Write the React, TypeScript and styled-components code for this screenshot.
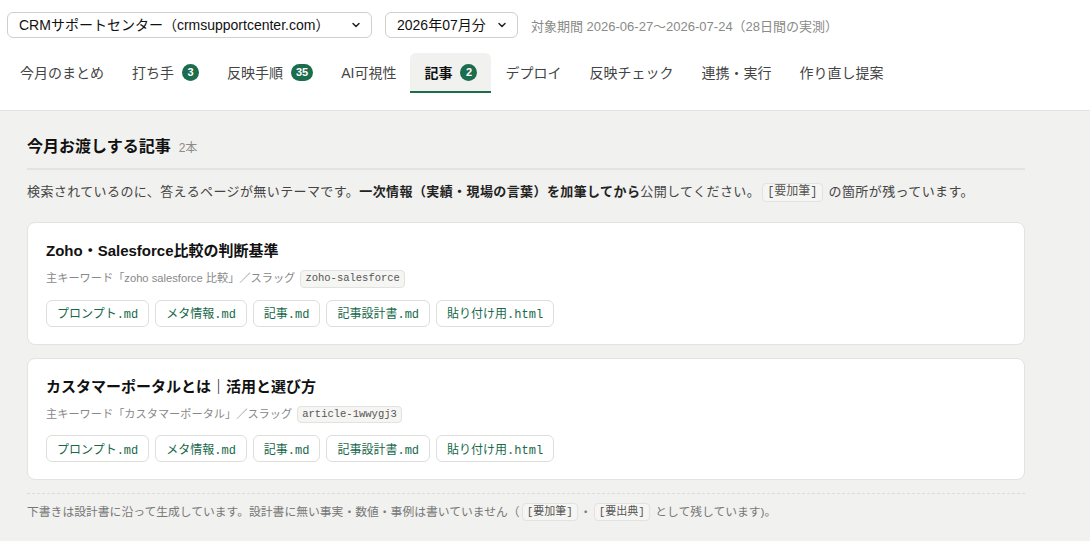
import { useState } from 'react';
import styled, { createGlobalStyle } from 'styled-components';
import { ChevronDown } from 'lucide-react';

const GlobalStyle = createGlobalStyle`
  html, body {
    margin: 0;
    padding: 0;
    background: #f1f1ef;
    font-family: "Liberation Sans", "Noto Sans CJK JP", sans-serif;
    color: #222;
  }
  * { box-sizing: border-box; }
`;

const MONO = `"Liberation Mono", "Noto Sans CJK JP", monospace`;

const Header = styled.header`
  background: #fff;
  padding: 12px 6px 17px;
  border-bottom: 1px solid #e2e2df;
`;

const TopRow = styled.div`
  display: flex;
  align-items: center;
  gap: 13px;
  height: 26px;
  padding-left: 1px;
`;

const SelectWrap = styled.div<{ $width: number }>`
  position: relative;
  width: ${(p) => p.$width}px;
  height: 26px;
`;

const Select = styled.select`
  appearance: none;
  width: 100%;
  height: 100%;
  border: 1px solid #cfcfcc;
  border-radius: 6px;
  background: #fff;
  padding: 0 28px 0 11px;
  font-family: inherit;
  font-size: 14px;
  color: #111;
  outline: none;
`;

const Chevron = styled.span`
  position: absolute;
  right: 10px;
  top: 7px;
  display: flex;
  pointer-events: none;
  color: #222;
`;

const Period = styled.span`
  font-size: 13px;
  color: #8a8a87;
`;

const Tabs = styled.nav`
  display: flex;
  margin-top: 15px;
`;

const Tab = styled.button<{ $active?: boolean }>`
  display: flex;
  align-items: center;
  gap: 8px;
  height: 40px;
  padding: 0 14px;
  border: none;
  border-bottom: 2px solid ${(p) => (p.$active ? '#1c6c4e' : 'transparent')};
  border-radius: 6px 6px 0 0;
  background: ${(p) => (p.$active ? '#f1f1ef' : 'transparent')};
  font-family: inherit;
  font-size: 14px;
  font-weight: ${(p) => (p.$active ? 700 : 400)};
  color: ${(p) => (p.$active ? '#111' : '#444')};
  cursor: pointer;
`;

const Badge = styled.span`
  display: inline-flex;
  align-items: center;
  justify-content: center;
  min-width: 17px;
  height: 17px;
  padding: 0 5px;
  border-radius: 9px;
  background: #1c6c4e;
  color: #fff;
  font-size: 11px;
  font-weight: 700;
`;

const Main = styled.main`
  padding: 25px 27px 30px;
`;

const Content = styled.div`
  max-width: 998px;
`;

const SectionHead = styled.div`
  display: flex;
  align-items: baseline;
  gap: 8px;
  padding-bottom: 10px;
  border-bottom: 2px solid #e3e3e0;
`;

const Title = styled.h2`
  margin: 0;
  font-size: 16px;
  line-height: 22px;
  font-weight: 700;
  color: #111;
`;

const Count = styled.span`
  font-size: 12px;
  color: #8a8a87;
`;

const Lead = styled.p`
  margin: 12px 0 20px;
  font-size: 13px;
  line-height: 20px;
  letter-spacing: 0.4px;
  color: #444;
  strong { color: #222; }
`;

const Chip = styled.code<{ $size: number }>`
  display: inline-block;
  padding: 0 4px;
  margin: 0 2px;
  font-family: ${MONO};
  font-size: ${(p) => p.$size}px;
  line-height: ${(p) => p.$size + 5}px;
  letter-spacing: 0;
  color: #555;
  background: #f5f5f3;
  border: 1px solid #e2e2df;
  border-radius: 4px;
  vertical-align: 1px;
`;

const Cards = styled.div`
  display: flex;
  flex-direction: column;
  gap: 13px;
`;

const Card = styled.article`
  background: #fff;
  border: 1px solid #e3e3e0;
  border-radius: 8px;
  padding: 17px 18px;
`;

const CardTitle = styled.h3`
  margin: 0;
  font-size: 15px;
  line-height: 22px;
  font-weight: 700;
  color: #111;
`;

const Meta = styled.div`
  margin-top: 7px;
  font-size: 11.2px;
  line-height: 18px;
  color: #888;
`;

const Files = styled.div`
  display: flex;
  gap: 6px;
  margin-top: 12px;
`;

const FileLink = styled.a`
  display: inline-flex;
  align-items: center;
  height: 27px;
  padding: 0 10px;
  border: 1px solid #dededb;
  border-radius: 6px;
  background: #fff;
  font-family: ${MONO};
  font-size: 12px;
  color: #17694a;
  text-decoration: none;
  cursor: pointer;
`;

const Footer = styled.p`
  margin: 13px 0 0;
  padding-top: 9px;
  border-top: 1px dashed #dcdcd8;
  font-size: 11.8px;
  line-height: 18px;
  color: #777;
`;

const tabs = [
  { label: '今月のまとめ' },
  { label: '打ち手', badge: '3' },
  { label: '反映手順', badge: '35' },
  { label: 'AI可視性' },
  { label: '記事', badge: '2' },
  { label: 'デプロイ' },
  { label: '反映チェック' },
  { label: '連携・実行' },
  { label: '作り直し提案' },
];

const files = ['プロンプト.md', 'メタ情報.md', '記事.md', '記事設計書.md', '貼り付け用.html'];

const articles = [
  { title: 'Zoho・Salesforce比較の判断基準', keyword: 'zoho salesforce 比較', slug: 'zoho-salesforce' },
  { title: 'カスタマーポータルとは｜活用と選び方', keyword: 'カスタマーポータル', slug: 'article-1wwygj3' },
];

export default function App() {
  const [active, setActive] = useState('記事');

  return (
    <>
      <GlobalStyle />
      <Header>
        <TopRow>
          <SelectWrap $width={365}>
            <Select defaultValue="crm">
              <option value="crm">CRMサポートセンター（crmsupportcenter.com）</option>
            </Select>
            <Chevron><ChevronDown size={12} strokeWidth={3} /></Chevron>
          </SelectWrap>
          <SelectWrap $width={133}>
            <Select defaultValue="2026-07">
              <option value="2026-07">2026年07月分</option>
            </Select>
            <Chevron><ChevronDown size={12} strokeWidth={3} /></Chevron>
          </SelectWrap>
          <Period>対象期間 2026-06-27〜2026-07-24（28日間の実測）</Period>
        </TopRow>
        <Tabs>
          {tabs.map((t) => (
            <Tab key={t.label} $active={active === t.label} onClick={() => setActive(t.label)}>
              {t.label}
              {t.badge && <Badge>{t.badge}</Badge>}
            </Tab>
          ))}
        </Tabs>
      </Header>
      <Main>
        <Content>
          <SectionHead>
            <Title>今月お渡しする記事</Title>
            <Count>2本</Count>
          </SectionHead>
          <Lead>
            検索されているのに、答えるページが無いテーマです。
            <strong>一次情報（実績・現場の言葉）を加筆してから</strong>
            公開してください。<Chip $size={12}>[要加筆]</Chip> の箇所が残っています。
          </Lead>
          <Cards>
            {articles.map((a) => (
              <Card key={a.slug}>
                <CardTitle>{a.title}</CardTitle>
                <Meta>
                  主キーワード「{a.keyword}」／スラッグ <Chip $size={10.5}>{a.slug}</Chip>
                </Meta>
                <Files>
                  {files.map((f) => (
                    <FileLink key={f}>{f}</FileLink>
                  ))}
                </Files>
              </Card>
            ))}
          </Cards>
          <Footer>
            下書きは設計書に沿って生成しています。設計書に無い事実・数値・事例は書いていません（
            <Chip $size={11}>[要加筆]</Chip>・<Chip $size={11}>[要出典]</Chip> として残しています)。
          </Footer>
        </Content>
      </Main>
    </>
  );
}
